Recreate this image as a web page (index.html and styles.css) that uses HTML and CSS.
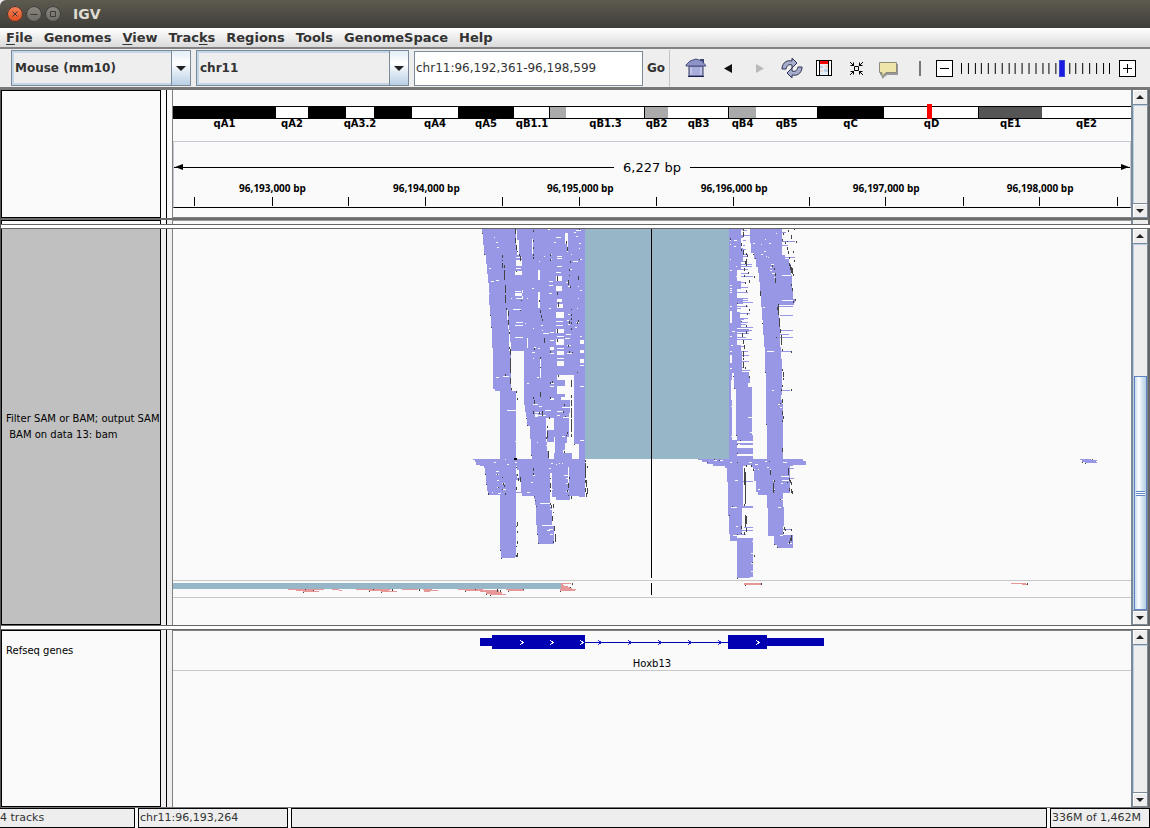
FILE: index.html
```html
<!DOCTYPE html>
<html lang="en">
<head>
<meta charset="utf-8">
<title>IGV</title>
<link rel="stylesheet" href="styles.css">
</head>
<body>
<div class="app">
  <header class="titlebar">
    <button class="win close" aria-label="Close"><svg viewBox="0 0 16 16"><path d="M5.500 5.500l5 5M10.500 5.500l-5 5"/></svg></button>
    <button class="win" aria-label="Minimize"><svg viewBox="0 0 16 16"><path d="M4.500 8.500h7"/></svg></button>
    <button class="win" aria-label="Maximize"><svg viewBox="0 0 16 16"><path d="M5.500 5.500h5v5h-5z"/></svg></button>
    <h1>IGV</h1>
  </header>
  <nav class="menubar">
    <button><u>F</u>ile</button><button>Genomes</button><button><u>V</u>iew</button><button>Trac<u>k</u>s</button><button>Regions</button><button>Tools</button><button>GenomeSpace</button><button>Help</button>
  </nav>
  <div class="toolbar">
    <div class="combo genome"><select aria-label="Genome"><option>Mouse (mm10)</option></select><i></i></div>
    <div class="combo chrom"><select aria-label="Chromosome"><option>chr11</option></select><i></i></div>
    <input class="locus" type="text" aria-label="Locus" value="chr11:96,192,361-96,198,599">
    <button class="go">Go</button>
    <div class="tools">
      <button aria-label="Home"><svg width="22" height="22" viewBox="0 0 22 22"><path d="M15 2h4v6h-4z" fill="#3f4272"/><path d="M4 9h14v10H4z" fill="#a9addb" stroke="#33365f"/><path d="M1 8l4-4 6-2 6 2 4 5H1z" fill="#8d93c4" stroke="#4a4e80"/><path d="M3 19.500h16" stroke="#1c2050"/><path d="M6 10v8M16 10v8" stroke="#d5d8f2"/></svg></button>
      <button aria-label="Back"><svg width="22" height="22" viewBox="0 0 22 22"><path d="M15 7v9L7 11.500z" fill="#111"/></svg></button>
      <button aria-label="Forward" disabled><svg width="22" height="22" viewBox="0 0 22 22"><path d="M7 7v9l8-4.500z" fill="#b9b9b9"/></svg></button>
      <button aria-label="Refresh"><svg width="22" height="22" viewBox="0 0 22 22"><g fill="#a7adcf" stroke="#2e3350"><path d="M1 11C2 5 6 3 11 4V1l5 5-5 5V8C8 7 6 8 5 12H1z"/><path d="M21 11c-1 6-5 8-10 7v3l-5-5 5-5v3c3 1 5 0 6-4h4z"/></g></svg></button>
      <button aria-label="Define a region of interest"><svg width="22" height="22" viewBox="0 0 22 22" shape-rendering="crispEdges"><path d="M3 3h16v16H3z" fill="#fff"/><path d="M6 7h10v11H6z" fill="#e7edf4"/><path d="M7 9h3v2H7zM11 12h4v3h-4z" fill="#bdd0e7"/><path d="M12 8h3v3h-3zM7 13h3v2H7z" fill="#f1d6c7"/><path d="M3.500 3.500h15v15h-15zM6.500 3v16M15.500 3v16" fill="none" stroke="#000"/><path d="M7 4h8v3H7z" fill="red"/></svg></button>
      <button aria-label="Resize tracks to fit in window"><svg width="22" height="22" viewBox="0 0 22 22" fill="none" stroke="#000"><path d="M9.500 9.500h4v4h-4zM5 5l4 4M18 5l-4 4M5 18l4-4M18 18l-4-4M5.500 8.500h3v-3M17.500 8.500h-3v-3M5.500 14.500h3v3M17.500 14.500h-3v3"/></svg></button>
      <button aria-label="Popup text"><svg width="22" height="22" viewBox="0 0 22 22"><path d="M3 7h18v11H10l-5 4V18H3z" fill="#999"/><path d="M2.500 5.500h17v10H9l-4 4v-4H2.500z" fill="#eee6a8" stroke="#8b8b78"/></svg></button>
    </div>
    <i class="sep"></i>
    <div class="zoom">
      <button aria-label="Zoom out"><svg width="15" height="15"><path d="M3 7.500h9"/></svg></button>
      <div class="slider">
        <svg viewBox="0 0 151 11" preserveAspectRatio="none"><path d="M0.500 0v11M7.500 0v11M14.500 0v11M20.500 0v11M27.500 0v11M34.500 0v11M41.500 0v11M48.500 0v11M54.500 0v11M61.500 0v11M68.500 0v11M75.500 0v11M82.500 0v11M88.500 0v11M95.500 0v11M109.500 0v11M115.500 0v11M122.500 0v11M129.500 0v11M136.500 0v11M143.500 0v11M149.500 0v11"/></svg>
        <input type="range" aria-label="Zoom level" min="0" max="100" value="67">
      </div>
      <button aria-label="Zoom in"><svg width="15" height="15"><path d="M3 7.500h9M7.500 3v9"/></svg></button>
    </div>
  </div>

  <main class="tracks">
    <section class="pane head">
      <div class="name"></div><div class="rail"></div>
      <div class="canvas">
        <div class="cyto">
          <div class="band black" style="flex-grow:103">qA1</div><div class="band" style="flex-grow:32">qA2</div><div class="band black" style="flex-grow:38"></div><div class="band" style="flex-grow:28">qA3.2</div><div class="band black" style="flex-grow:38"></div><div class="band" style="flex-grow:46">qA4</div><div class="band black" style="flex-grow:56">qA5</div><div class="band" style="flex-grow:36">qB1.1</div><div class="band grey" style="flex-grow:16"></div><div class="band" style="flex-grow:79">qB1.3</div><div class="band grey" style="flex-grow:23">qB2</div><div class="band" style="flex-grow:61">qB3</div><div class="band grey" style="flex-grow:27">qB4</div><div class="band" style="flex-grow:61">qB5</div><div class="band black" style="flex-grow:67">qC</div><div class="band here" style="flex-grow:95">qD</div><div class="band dark" style="flex-grow:63">qE1</div><div class="band" style="flex-grow:89">qE2</div>
        </div>
        <div class="ruler">
          <div class="span"><i></i><b>6,227 bp</b><i></i></div>
          <svg class="scale">
            <text x="10.3%" y="10">96,193,000 bp</text><text x="26.4%" y="10">96,194,000 bp</text><text x="42.5%" y="10">96,195,000 bp</text><text x="58.6%" y="10">96,196,000 bp</text><text x="74.500%" y="10">96,197,000 bp</text><text x="90.600%" y="10">96,198,000 bp</text>
            <rect x="2.1%" y="15"/><rect x="10.2%" y="15"/><rect x="18.2%" y="15"/><rect x="26.3%" y="15"/><rect x="34.3%" y="15"/><rect x="42.4%" y="15"/><rect x="50.4%" y="15"/><rect x="58.5%" y="15"/><rect x="66.4%" y="15"/><rect x="74.4%" y="15"/><rect x="82.5%" y="15"/><rect x="90.5%" y="15"/><rect x="98.6%" y="15"/>
          </svg>
        </div>
      </div>
      <div class="bar"><button aria-label="Scroll up"></button><div class="groove"></div><button class="down" aria-label="Scroll down"></button></div>
    </section>
    <section class="pane sliver"><div class="name"></div><div class="rail"></div><div class="canvas"></div><div class="bar"></div></section>
    <div class="divider"></div>
    <section class="pane data">
      <div class="name"><span>Filter SAM or BAM; output SAM<br>&nbsp;BAM on data 13: bam</span></div><div class="rail"></div>
      <div class="canvas">
        <svg class="reads" viewBox="0 0 958 396" preserveAspectRatio="none">
          <path class="rule" d="M0 351.500h958M0 368.500h958"/>
          <rect class="junction" x="412" y="0" width="144" height="230"/>
          <rect class="junction" x="0" y="354" width="388" height="6"/>
          <svg x="297" y="-4" width="130" height="180" viewBox="0 0 390 540">
            <path class="read" d="M37 12H345V540H312V450H285V540H90V498H75V492H69V370H66V306H63V270H60V240H57V174H54V147H51V117H48V90H42V60H39V27H37z"/>
            <path class="hole" d="M126 378H162V540H138V498H126zM111 255h3v30h3v30h3v35h3v28h3v110h-3V378h-6v-66h-3zM138 15h3v30h6v45h-6V60h-3zM204 135h6v30h-6zM204 201h6v48h-6zM258 153h18v15h-18zM258 182h18v15h-18zM261 222h15v10h-15zM261 237h18v12h-18zM258 261h24v18h-24zM261 450h48v15h-48zM261 484h40v23h-40zM273 517h30v23h-30zM285 24h9v57h-3V57h-6zM138 105h18v18h-18zM135 138h21v12h-21zM135 204h24v10h-24zM159 195h-3v27h3zM258 312h24v12h-24zM258 342h24v18h-24zM261 378h21v12h-21zM261 408h21v15h-21zM186 42h4v45h-4zM171 339h3v30h-3zM330 345h12v12h-12zM330 374h12v10h-12zM330 402h12v12h-12zM240 365h12v9h-12zM210 400h3v60h-3zM297 465h9v75h-9zM240 520h12v20h-12zM285 450h27v30h-12v-15h-15zM99 453h18v3h-18z"/>
            <path class="gap" d="M72 37h3M78 52h6M81 67h6M57 130h6M63 169h9M78 166h9M51 205h9M78 457h9M138 97h18M138 130h16M135 199h18M138 220h20M138 292h21M135 301h24M135 337h24M129 253h24M123 220h3M171 220h3M165 295h3M186 190h6M189 310h3M207 109h3M222 94h3M240 88h6M240 102h6M258 37h15M252 52h6M261 94h15M261 100h15M261 124h15M258 142h15M237 169h12M237 181h12M237 205h9M237 250h6M219 325h18M213 301h6M216 316h3M240 322h12M240 385h12M258 289h20M258 301h21M261 334h21M240 346h12M261 370h21M261 400h21M288 327h15M285 340h15M291 361h12M291 385h15M300 133h6M309 109h15M318 34h6M312 22h6M318 16h15M327 103h9M324 157h3M324 184h3M330 196h6M324 220h3M321 250h3M318 292h9M315 307h6M330 334h6M330 421h12M330 484h12M327 55h6M327 70h3M303 88h3M288 172h9M294 184h6M294 268h6M291 286h6M294 298h6M192 367h6M186 382h9M189 400h3M171 475h6M204 370h6M240 475h12M240 484h12M234 13h6M201 457h6M186 532h9"/>
            <path class="mark" d="M37 24v3M43 87v3M61 270v3M64 306v3M98 91v8M98 104v4M98 115v14M104 120v8M104 136v28M107 180v24M107 210v24M110 250v6M115 258v14M115 285v14M118 320v8M118 366v6M121 373v18M121 400v44M121 460v18M106 448v5M124 490v6M136 12v15M136 38v15M139 60v14M142 77v5M148 88v4M152 92v15M139 138v4M154 226v3M151 256v3M190 15v7M190 46v6M190 66v6M190 88v5M190 97v6M208 226v6M211 256v8M214 270v8M217 282v5M223 339v15M211 396v6M211 426v4M211 500v15M193 370v5M190 516v5M241 88v5M241 103v5M262 153v15M262 201v9M265 232v15M262 312v12M262 342v10M265 450v6M289 48v9M292 66v12M298 132v6M301 108v6M298 150v4M295 165v15M301 184v6M304 251v3M304 267v6M304 280v4M298 288v8M304 291v6M304 310v6M295 360v6M298 378v6M307 380v4M325 154v10M325 285v5M322 291v6M328 12v4M328 102v3M322 440v4M304 465v20M304 510v9M139 498v6M142 518v7M241 378v5M241 472v6M247 468v6M241 516v5"/>
          </svg>
          <svg x="297" y="171" width="130" height="205" viewBox="0 0 390 615">
            <path class="read" d="M90 0H138V177H186V165H183V117H180V78H171V51H168V36H165V12H162V0H300V40H297V110H291V130H285V150H279V160H305V177H327V132H312V0H345V291H327V288H300V300H258V291H240V320H246V378H252V431H204V403H201V375H198V315H195V297H192V288H156V278H137V470H135V474H93V450H90V285H54V273H51V252H48V222H45V204H42V198H30V195H18V186H15V180H9V177H90z"/>
            <path class="hole" d="M228 54h24v36h-21v36h21v51h-15v-25h-6v-26h-3zM252 110h3v50h-3zM138 198h4v12h6v24h-8v-12h-2zM138 240h15v35h-15zM240 219h6v72h-6zM297 201h-3v60h3zM210 309h30v3h-30zM216 375h33v3h-33zM195 42h9v9h-9z"/>
            <path class="gap" d="M111 31h27M135 124h3M189 13h15M195 37h18M207 19h9M225 31h18M204 46h24M276 22h24M261 34h18M261 46h9M279 52h21M276 109h9M201 127h3M228 136h3M330 121h12M111 192h6M72 187h6M135 187h6M105 178h3M78 214h9M78 223h9M81 241h6M81 262h6M84 280h9M96 250h9M99 268h9M66 277h3M189 208h3M189 226h6M243 190h6M258 193h3M267 190h3M276 190h3M237 205h6M240 226h6M240 235h6M240 268h9M282 226h15M288 235h9M288 250h9M288 274h9M171 277h9M183 247h6M240 328h9M237 388h12M231 391h9M240 402h9"/>
            <path class="mark" d="M169 54v4M172 74v3M193 0v12M190 34v8M208 36v5M217 34v14M232 78v5M232 92v23M229 111v5M238 51v7M235 153v20M283 12v6M280 34v5M286 48v4M292 95v6M289 104v4M283 153v5M304 0v18M304 24v30M304 57v40M304 102v10M313 132v3M184 165v3M46 222v3M49 252v3M55 280v4M82 222v3M85 262v3M97 231v3M100 250v5M103 254v7M97 268v3M106 280v4M139 201v4M142 222v5M145 234v9M151 230v15M139 261v9M190 205v8M190 220v4M193 288v3M196 300v3M199 318v3M241 234v4M241 250v15M241 270v6M298 231v6M295 250v15M292 270v5M295 285v3M304 288v9M346 180v5M346 189v45M352 198v6M346 240v9M349 240v20M346 264v12M352 264v18M349 279v12M241 309v6M244 315v9M250 312v12M250 336v4M247 348v14M253 378v15M256 402v24M250 423v5M202 402v3M205 429v3M142 366v12M139 378v4M142 393v5M142 423v8M139 438v3M142 459v12M139 466v6M91 450v3M94 474v3"/>
            <path d="M132 174h9v6h-9z"/>
          </svg>
          <svg x="517" y="-4" width="130" height="180" viewBox="0 0 390 540">
            <path class="read" d="M117 12H141V111H141V360H153V378H156V442H177V452H180V474H174V486H186V540H138V492H132V465H123V540H117zM180 12H276V90H285V102H297V118H303V150H306V195H309V223H315V234H312V240H267V300H270V366H273V402H276V510H273V540H228V444H225V366H222V330H219V285H216V246H213V210H210V170H207V144H204V126H198V102H192V84H183V54H180zM141 12h17v100h-17z"/>
            <path class="read row" d="M141 16h29M141 31h39M150 46h18M153 61h12M153 73h15M141 88h33M159 94h15M141 109h23M153 118h33M153 124h33M141 133h33M153 145h21M153 154h36M141 172h27M141 187h33M141 202h33M141 220h33M141 226h33M141 231h48M141 243h33M141 250h12M141 264h39M141 279h33M141 283h21M141 291h33M141 298h27M141 307h48M135 316h51M135 325h42M135 337h33M135 342h51M141 363h21M141 378h33M141 391h36M141 409h36M141 427h21M141 436h39M276 22h12M276 49h39M276 61h18M276 97h39M276 121h24M270 271h39M267 244h42M267 315h42M267 328h30M267 337h42M273 380h30M273 495h27"/>
            <path class="read" d="M135 112h18v22h-18zM135 168h19v24h-19zM135 218h24v18h-24zM135 262h15v20h-15zM135 286h18v24h-18zM135 312h42v10h-42z"/>
            <path class="hole" d="M120 258h6v36h-6zM153 15h6v15h-6zM153 39h6v30h-6zM120 390h6v20h-6zM126 444h6v40h-6z"/>
            <path class="gap" d="M120 46h3M120 58h3M132 64h6M132 46h9M138 124h3M120 136h6M138 154h3M120 196h6M120 181h6M120 190h6M120 202h6M120 244h6M120 334h6M123 361h6M120 379h6M120 412h6M120 430h6M126 319h9M225 43h3M189 55h6M213 58h3M237 55h6M222 79h6M213 88h6M234 97h3M228 94h3M258 25h3M243 118h9M240 127h6M246 145h9M240 136h6M252 157h3M219 247h6M231 379h21M276 151h27M276 226h33M303 34h9M246 495h6M120 103h3M165 85h6"/>
            <path class="mark" d="M122 39v5M160 12v6M160 21v15M154 54v9M154 72v5M160 75v15M169 84v6M172 90v6M169 102v20M166 108v8M163 130v9M163 150v6M175 141v6M193 153v5M178 165v8M166 171v6M169 195v6M142 234v3M178 253v5M169 240v5M172 264v6M154 288v3M169 300v5M169 318v9M157 325v12M160 345v12M163 360v12M160 378v18M160 400v5M160 410v20M166 427v5M178 453v5M130 453v3M133 490v3M190 87v3M196 99v3M211 198v15M217 294v3M226 441v3M256 144v9M256 160v15M247 120v6M253 130v4M280 24v6M277 42v6M286 51v5M295 15v5M304 30v12M292 48v4M313 12v3M319 48v5M292 66v9M295 78v9M310 78v6M298 96v7M313 106v5M298 114v10M301 120v15M304 125v18M307 130v16M310 147v5M304 177v6M307 190v7M316 222v6M310 228v6M265 237v33M268 280v27M271 312v12M274 330v30M262 246v9M259 336v4M277 372v6M304 378v5M277 432v6M280 441v15M280 460v5M277 480v6M274 492v6M304 492v5M277 522v12"/>
          </svg>
          <svg x="517" y="171" width="130" height="205" viewBox="0 0 390 615">
            <path class="read" d="M117 0H126V120H189V132H141V145H189V162H141V167H189V177H231V72H228V0H276V12H279V177H338V183H347V194H308V198H300V264H299V279H279V321H282V378H279V404H308V444H261V435H252V408H234V324H231V285H204V276H198V243H192V213H189V201H183V195H168V198H158V318H189V324H155V402H141V414H189V531H180V534H141V423H120V402H117V348H114V246H111V204H105V198H69V192H51V186H36V180H24V177H117zM138 0H186V105H189V120H141V105H138z"/>
            <path class="read row" d="M155 243h34M155 382h34M155 391h33M141 403h27M279 205h33M279 235h33M279 247h20M279 388h27M279 406h30"/>
            <path class="hole" d="M141 124h48v9h-48z"/><path class="read row" d="M141 121h48M141 129h48M150 133h39"/>
            <path class="gap" d="M123 19h3M123 109h3M174 52h12M180 97h6M270 22h6M264 13h6M276 154h3M279 187h12M225 184h6M72 181h9M90 181h9M120 187h6M177 187h9M195 193h9M192 208h3M204 208h3M240 208h3M240 220h3M249 241h6M249 268h6M231 202h6M273 229h24M276 241h24M273 250h6M135 241h9M123 322h18M153 382h9M138 379h6M129 406h12M270 406h9M264 322h9M270 298h9M204 268h6M186 424h3M183 460h6M183 490h6M183 514h6M294 430h12"/>
            <path class="mark" d="M277 0v9M271 9v3M277 33v12M280 48v10M277 60v6M277 144v12M229 72v3M139 104v3M151 120v3M142 132v3M142 160v3M52 186v4M73 177v3M88 180v3M142 186v3M169 195v6M184 195v5M190 208v5M238 183v3M295 204v22M292 246v3M298 234v10M301 240v9M304 246v8M298 264v8M304 267v12M307 273v8M163 204v50M166 215v96M163 312v6M166 345v35M169 348v24M154 378v9M169 384v12M163 396v8M154 399v4M118 346v3M128 318v3M142 402v3M271 297v3M283 381v9M286 388v4M280 396v6M304 388v5M304 405v18M301 414v9M298 424v8M253 432v3M262 441v3M241 210v15M253 240v6M250 249v30M253 270v4M193 465v6M142 534v3M187 486v4"/>
          </svg>
          <svg x="-23" y="331" width="450" height="60" viewBox="0 0 1350 180">
            <path class="reverse" d="M1233 69h30v3h-25v3h5v3h12v3h6v3h6v4h12v3h-3v3h-45v-6h2z"/>
            <path class="reverse row" d="M414 88h108M438 91h50M458 94h49M546 88h21M567 91h9M618 88h105M657 91h60M692 94h49M756 88h48M819 88h27M822 91h42M822 94h18M924 88h74M945 91h102M990 94h56M1008 97h48M1008 100h48M1020 103h48M1068 88h54M1074 91h48"/>
            <path class="mark" d="M466 87v3M490 90v4M460 96v3M670 87v3M658 93v3M694 96v3M727 87v6M808 87v6M976 87v3M946 93v3M1009 102v3M1021 105v3M1042 87v9M1051 90v6M1075 93v3M1120 87v3M1267 69v6M1261 80v4M1231 92v4"/>
          </svg>
          <path class="reverse" d="M571 354h17v2h-17zM838 354h15v1h-15zM849 355h5v1h-5z"/>
          <path class="mark small" d="M572.500 356v1M588.500 354v2M854.500 354v2"/>
          <path class="read" d="M907 230h11v1h6v1h-1v1h1v1h-12v-1h-3v-2h-2z"/>
          <path class="mark small" d="M919.500 230v1M909.500 233v1M912.500 234v1"/>
          <path class="center" d="M478.500 0v349M478.500 354v12"/>
        </svg>
      </div>
      <div class="bar"><button aria-label="Scroll up"></button><div class="groove"><div class="thumb"><i></i></div></div><button class="down" aria-label="Scroll down"></button></div>
    </section>
    <div class="divider"></div>
    <section class="pane genes">
      <div class="name"><span>Refseq genes</span></div><div class="rail"></div>
      <div class="canvas">
        <div class="gene">
          <svg viewBox="0 1 958 25" preserveAspectRatio="none"><path fill="#0000b2" d="M307 8h12V5h93v14h-93v-3h-12zM555 5h39v3h57v8h-57v3h-39zM412 12h143v1H412z"/><path fill="none" stroke="#fff" d="M347 10l3 2.500-3 2.500M377 10l3 2.500-3 2.500M407 10l3 2.500-3 2.500M583 10l3 2.500-3 2.500"/><path fill="none" stroke="#2020d0" d="M425 10l3 2.500-3 2.500M455 10l3 2.500-3 2.500M485 10l3 2.500-3 2.500M515 10l3 2.500-3 2.500M545 10l3 2.500-3 2.500"/></svg>
          <span>Hoxb13</span>
        </div>
      </div>
      <div class="bar"><button aria-label="Scroll up"></button><div class="groove"></div><button class="down" aria-label="Scroll down"></button></div>
    </section>
  </main>
  <footer class="status"><div>4 tracks</div><div>chr11:96,193,264</div><div></div><div>336M of 1,462M</div></footer>
</div>
</body>
</html>
```
FILE: styles.css
```css
* { box-sizing: border-box; }
body { margin: 0; font-family: "DejaVu Sans", sans-serif; font-size: 12px; color: #333; background: #eee; }
button { font: inherit; color: inherit; border: 0; background: none; padding: 0; margin: 0; }
.app { display: flex; flex-direction: column; min-height: 100vh; }

.titlebar { display: flex; align-items: center; gap: 3px; height: 28px; padding-left: 7px; border-radius: 6px 0 0; background: linear-gradient(#5d5b50, #3e3d39); }
.titlebar h1 { margin: 0 0 0 9px; font-size: 14px; line-height: 30px; color: #dfdbd2; }
.win { width: 16px; height: 16px; border-radius: 50%; background: linear-gradient(#8b8980, #6c6a63); box-shadow: 0 0 0 1px #3a3935 inset; }
.win svg { display: block; width: 16px; height: 16px; fill: none; stroke: #3c3b37; }
.win.close { background: linear-gradient(#f6825a, #df4c1e); }

.menubar { display: flex; gap: 11px; height: 21px; padding: 0 6px; border-bottom: 2px solid #828282; background: linear-gradient(#fff, #dadada); font-weight: bold; }
.menubar button { line-height: 18px; font-size: 13px; }
.menubar u { text-underline-offset: 2px; }

.toolbar { display: flex; align-items: center; height: 41px; padding: 0 14px 0 11px; border-bottom: 3px solid #777; background: #eee; }
.combo { position: relative; height: 36px; border: 1px solid #7a8a99; margin-right: 5px; }
.combo.genome { width: 180px; }
.combo.chrom { width: 213px; }
.combo select { appearance: none; width: 100%; height: 100%; border: 2px solid #c3d6e8; border-radius: 0; background: #eee; padding: 0 1px 1px; font: bold 12px "DejaVu Sans", sans-serif; color: #333; }
.combo i { position: absolute; right: 0; top: 0; bottom: 0; width: 19px; border-left: 1px solid #7a8a99; background: linear-gradient(#e2ecf6, #fff 35%, #b8cfe5); display: grid; place-items: center; pointer-events: none; }
.combo i::before { content: ""; border: solid transparent; border-width: 5px 5px 0; border-top-color: #222; }
.locus { width: 229px; height: 35px; border: 1px solid #7a8a99; background: #fff; padding: 0 1px 1px; font: 12px "DejaVu Sans", sans-serif; color: #333; }
.go { width: 27px; height: 37px; border-right: 1px solid #c4c4c4; font-weight: bold; }
.tools { display: flex; gap: 10px; margin-left: 15px; }
.tools button, .tools svg { display: block; width: 22px; height: 22px; }
.sep { width: 2px; height: 15px; margin: 0 15px 0 20px; background: #777; }
.zoom { display: flex; flex: 1; align-items: center; gap: 8px; }
.zoom button { width: 17px; height: 17px; border: 1px solid #000; background: #fff; display: grid; place-items: center; }
.zoom button svg, .slider svg { display: block; fill: none; stroke: #000; shape-rendering: crispEdges; }
.slider { position: relative; flex: 1; }
.slider svg { width: 100%; height: 11px; }
.slider input { position: absolute; left: -3px; top: -3px; width: calc(100% + 6px); height: 17px; margin: 0; appearance: none; background: none; }
.slider input::-webkit-slider-thumb { appearance: none; width: 6px; height: 17px; background: #1a1ae0; border: 1px solid #3a4ad0; }

.tracks { display: flex; flex-direction: column; flex: 1; border-left: 1px solid #555; }
.pane { display: grid; grid-template-columns: 160px 12px minmax(0, 1fr) 19px; }
.name { border: 1px solid #000; background: #fafafa; display: flex; color: #000; font-size: 10px; line-height: 16px; white-space: nowrap; overflow: hidden; }
.rail { margin-left: 5px; border-left: 1px solid #000; border-right: 1px solid #808080; background: #eee; }
.canvas { background: #fafafa; min-width: 0; }
.head, .sliver { background: #fafafa; }
.head { height: 128px; }
.head .rail { background: #fafafa; }
.sliver { height: 6px; border-top: 2px solid #6b6b6b; }
.sliver .name { border-bottom: 0; }
.sliver .canvas { border-top: 1px solid #999; }
.divider { height: 5px; border-top: 1px solid #666; border-bottom: 1px solid #666; background: #fff; }
.data { border-bottom: 1px solid #666; }
.data .name { background: #c0c0c0; border-top: 0; align-items: center; padding-left: 4px; }
.data + .divider { border-top: 0; height: 4px; }
.genes { flex: 1; border-bottom: 1px solid #777; }
.genes .name { padding: 12px 4px; }
.genes .canvas { border-top: 1px solid #808080; }

.cyto { display: flex; margin-top: 16px; height: 35px; font-size: 10px; font-weight: bold; color: #000; }
.band { position: relative; flex: 1 1 0; width: 0; display: flex; flex-direction: column; align-items: center; line-height: 9px; white-space: nowrap; }
.band::before { content: ""; width: 100%; height: 11px; border: solid #000; border-width: 1px 0; background: #fff; flex: none; }
.band.black::before { background: #000; }
.band.grey::before { background: #aaa; border-width: 1px; }
.band.dark::before { background: #555; border-width: 1px; }
.band.here::after { content: ""; position: absolute; left: 45%; top: -2px; width: 5px; height: 15px; background: red; }
.ruler { border: 1px solid #c8c8d2; border-bottom: 1px solid #000; height: 67px; padding-top: 16px; }
.head .canvas { border-bottom: 1px solid #808080; }
.span { display: flex; align-items: center; gap: 9px; height: 18px; color: #000; }
.span b { font-size: 13px; font-weight: normal; }
.span i { position: relative; flex: 1; height: 1px; background: #000; }
.span i::before { content: ""; position: absolute; top: -3px; border: 3px solid transparent; }
.span i:first-child::before { left: 1px; border-right: 8px solid #000; border-left: 0; }
.span i:last-child::before { right: 1px; border-left: 8px solid #000; border-right: 0; }
.scale { display: block; width: 100%; height: 25px; margin-top: 6px; shape-rendering: crispEdges; }
.scale text { font: bold 10px "Open Sans", sans-serif; text-anchor: middle; fill: #000; }
.scale rect { width: 1px; height: 9px; fill: #000; }

.reads { display: block; width: 100%; height: 396px; shape-rendering: crispEdges; }
.read { fill: #9797e6; }
.reverse { fill: #e69797; }
.row { fill: none; stroke: #9797e6; stroke-width: 3; }
.reverse.row { stroke: #e69797; }
.hole { fill: #fafafa; }
.gap { fill: none; stroke: #fafafa; stroke-width: 3; }
.mark { fill: none; stroke: #444; stroke-width: 3; }
.mark.small { stroke-width: 1; }
.junction { fill: #97b7c9; }
.rule { stroke: #c8c8c8; }
.center { stroke: #000; }
.gene { display: flex; flex-direction: column; align-items: center; height: 40px; border-bottom: 1px solid #c8c8d0; font-size: 10px; line-height: 16px; color: #000; }
.gene svg { display: block; width: 100%; height: 25px; shape-rendering: crispEdges; flex: none; }

.bar { display: flex; flex-direction: column; border-left: 2px solid #7a8a99; border-right: 2px solid #666; background: #eee; min-height: 0; }
.bar button { flex: none; height: 15px; border: solid #7a8a99; border-width: 0 1px 1px 0; box-shadow: 1px 1px #fff inset; display: grid; place-items: center; }
.bar button::before { content: ""; border: 4px solid transparent; border-top: 0; border-bottom: 4px solid #222; }
.bar button.down { border-top: 1px solid #7a8a99; }
.bar button.down::before { border-top: 4px solid #222; border-bottom: 0; }
.groove { flex: 1; display: flex; flex-direction: column; justify-content: flex-end; border-left: 1px solid #b8cfe5; border-top: 1px solid #b8cfe5; border-right: 1px solid #7a8a99; }
.thumb { height: 64%; border: 1px solid #5f82c2; background: linear-gradient(90deg, #c9dcee, #fff 35%, #dbe8f4 60%, #b5cde3); display: grid; place-items: center; }
.thumb i { width: 9px; height: 5px; border: solid #5f82c2; border-width: 1px 0; background: linear-gradient(#fff 1px, #5f82c2 1px 2px, #fff 2px); }

.status { display: grid; grid-template-columns: 135px 150px minmax(0, 1fr) 100px; gap: 3px; height: 20px; background: #fafafa; font-size: 11px; }
.status div { border: 1px solid #000; background: #eee; line-height: 18px; padding-left: 1px; white-space: nowrap; }
.status div:first-child { border-left: 0; padding-left: 0; }
```
